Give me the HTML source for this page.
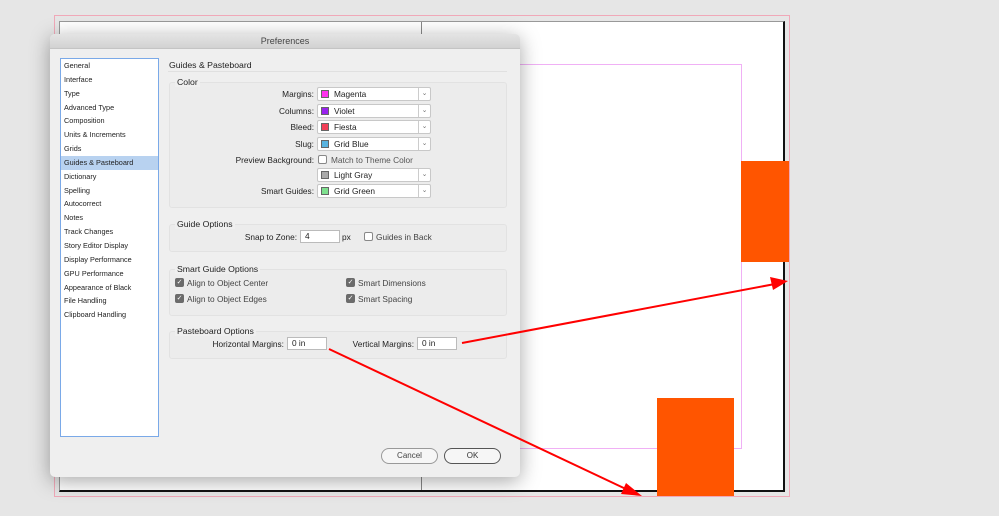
<!DOCTYPE html>
<html><head><meta charset="utf-8"><style>
*{box-sizing:border-box;margin:0;padding:0}
body{width:999px;height:516px;background:#e6e6e6;position:relative;overflow:hidden;font-family:"Liberation Sans",sans-serif;color:#222}
.a{position:absolute}
.t{position:absolute;font-size:8.3px;white-space:nowrap;line-height:10px}
.lbl{position:absolute;font-size:8.3px;white-space:nowrap;text-align:right;width:200px;line-height:10px}
.dd{position:absolute;left:317px;width:114px;height:14px;background:#fff;border:1px solid #c8c8c8;border-radius:2px;font-size:8.3px;line-height:12px;padding-left:16px}
.dd i{position:absolute;left:3px;top:2px;width:8px;height:8px;border:1px solid #666}
.dd b{position:absolute;right:0;top:0;width:12px;height:12px;border-left:1px solid #ccc;font-weight:normal;font-size:7px;color:#777;text-align:center;line-height:11px}
.grp{position:absolute;left:169px;width:338px;border:1px solid #e2e2e2;border-radius:3px;background:#ececec}
.gt{position:absolute;font-size:8.7px;line-height:10px;background:#efefef;padding:0 2px}
.cb{position:absolute;width:9px;height:9px;border:1px solid #888;border-radius:2px;background:#fff}
.cbk{background:#6b6b6b;border-color:#6b6b6b;color:#fff;font-size:7px;line-height:8px;text-align:center}
.inp{position:absolute;height:13px;background:#fff;border:1px solid #bbb;font-size:8.3px;line-height:11px;padding-left:4px}
.side{position:absolute;left:60px;top:58px;width:99px;height:379px;background:#fff;border:1px solid #7aa9e8}
.side div{height:13.85px;font-size:7.3px;line-height:13.85px;padding-left:3px;color:#222}
.side .sel{background:#b8d2f0}
</style></head><body>
<div class="a" style="left:54px;top:15px;width:736px;height:482px;border:1px solid #f0a8b8"></div>
<div class="a" style="left:59px;top:21px;width:726px;height:471px;background:#fff;border-top:1px solid #999;border-left:1px solid #999;border-right:2px solid #111;border-bottom:2px solid #111"></div>
<div class="a" style="left:421px;top:22px;width:1px;height:468px;background:#888"></div>
<div class="a" style="left:520px;top:64px;width:222px;height:385px;border:1px solid #f0b0f5;border-left:none"></div>
<div class="a" style="left:741px;top:161px;width:48px;height:101px;background:#ff5500"></div>
<div class="a" style="left:657px;top:398px;width:77px;height:98px;background:#ff5500"></div>

<div class="a" style="left:50px;top:34px;width:470px;height:443px;background:#efefef;border-radius:5px;box-shadow:0 4px 20px rgba(0,0,0,.35);overflow:hidden">
 <div class="a" style="left:0;top:0;width:470px;height:15px;background:linear-gradient(#e4e4e4,#d2d2d2);border-bottom:1px solid #c4c4c4;text-align:center;font-size:9px;line-height:15px;color:#444">Preferences</div>
</div>
<div class="side">
<div>General</div><div>Interface</div><div>Type</div><div>Advanced Type</div><div>Composition</div><div>Units &amp; Increments</div><div>Grids</div><div class="sel">Guides &amp; Pasteboard</div><div>Dictionary</div><div>Spelling</div><div>Autocorrect</div><div>Notes</div><div>Track Changes</div><div>Story Editor Display</div><div>Display Performance</div><div>GPU Performance</div><div>Appearance of Black</div><div>File Handling</div><div>Clipboard Handling</div>
</div>
<div class="t" style="left:169px;top:60px;font-size:8.7px">Guides &amp; Pasteboard</div>
<div class="a" style="left:168px;top:71px;width:339px;height:1px;background:#e0e0e0"></div>

<div class="grp" style="top:82px;height:126px"></div>
<div class="gt" style="left:175px;top:77px">Color</div>
<div class="lbl" style="left:114px;top:89px">Margins:</div>
<div class="dd" style="top:87px"><i style="background:#ff33ee"></i>Magenta<b>⌄</b></div>
<div class="lbl" style="left:114px;top:106px">Columns:</div>
<div class="dd" style="top:104px"><i style="background:#9922ee"></i>Violet<b>⌄</b></div>
<div class="lbl" style="left:114px;top:122px">Bleed:</div>
<div class="dd" style="top:120px"><i style="background:#f24058"></i>Fiesta<b>⌄</b></div>
<div class="lbl" style="left:114px;top:139px">Slug:</div>
<div class="dd" style="top:137px"><i style="background:#5ab4e0"></i>Grid Blue<b>⌄</b></div>
<div class="lbl" style="left:114px;top:155px">Preview Background:</div>
<div class="cb" style="left:318px;top:155px"></div>
<div class="t" style="left:331px;top:155px;color:#555">Match to Theme Color</div>
<div class="dd" style="top:168px"><i style="background:#aaa"></i>Light Gray<b>⌄</b></div>
<div class="lbl" style="left:114px;top:186px">Smart Guides:</div>
<div class="dd" style="top:184px"><i style="background:#7ee08e"></i>Grid Green<b>⌄</b></div>

<div class="grp" style="top:224px;height:28px"></div>
<div class="gt" style="left:175px;top:219px">Guide Options</div>
<div class="lbl" style="left:97px;top:232px">Snap to Zone:</div>
<div class="inp" style="left:300px;top:230px;width:40px">4</div>
<div class="t" style="left:342px;top:232px">px</div>
<div class="cb" style="left:364px;top:232px"></div>
<div class="t" style="left:376px;top:232px;color:#444">Guides in Back</div>

<div class="grp" style="top:269px;height:47px"></div>
<div class="gt" style="left:175px;top:264px">Smart Guide Options</div>
<div class="cb cbk" style="left:175px;top:278px">✓</div>
<div class="t" style="left:187px;top:278px;color:#444">Align to Object Center</div>
<div class="cb cbk" style="left:175px;top:294px">✓</div>
<div class="t" style="left:187px;top:294px;color:#444">Align to Object Edges</div>
<div class="cb cbk" style="left:346px;top:278px">✓</div>
<div class="t" style="left:358px;top:278px;color:#444">Smart Dimensions</div>
<div class="cb cbk" style="left:346px;top:294px">✓</div>
<div class="t" style="left:358px;top:294px;color:#444">Smart Spacing</div>

<div class="grp" style="top:331px;height:28px"></div>
<div class="gt" style="left:175px;top:326px">Pasteboard Options</div>
<div class="lbl" style="left:84px;top:339px">Horizontal Margins:</div>
<div class="inp" style="left:287px;top:337px;width:40px">0 in</div>
<div class="lbl" style="left:214px;top:339px">Vertical Margins:</div>
<div class="inp" style="left:417px;top:337px;width:40px">0 in</div>

<div class="a" style="left:381px;top:448px;width:57px;height:16px;border:1px solid #999;border-radius:8px;background:#f6f6f6;font-size:8px;line-height:14px;text-align:center;color:#444">Cancel</div>
<div class="a" style="left:444px;top:448px;width:57px;height:16px;border:1.5px solid #555;border-radius:8px;background:#f6f6f6;font-size:8px;line-height:13px;text-align:center;color:#333">OK</div>

<svg class="a" style="left:0;top:0" width="999" height="516">
<line x1="462" y1="343" x2="775" y2="284" stroke="#f00" stroke-width="2"/>
<polygon points="788,281 770,277 773,290" fill="#f00"/>
<line x1="329" y1="349" x2="628" y2="490" stroke="#f00" stroke-width="2"/>
<polygon points="642,496 626,483 621,494" fill="#f00"/>
</svg>
</body></html>
